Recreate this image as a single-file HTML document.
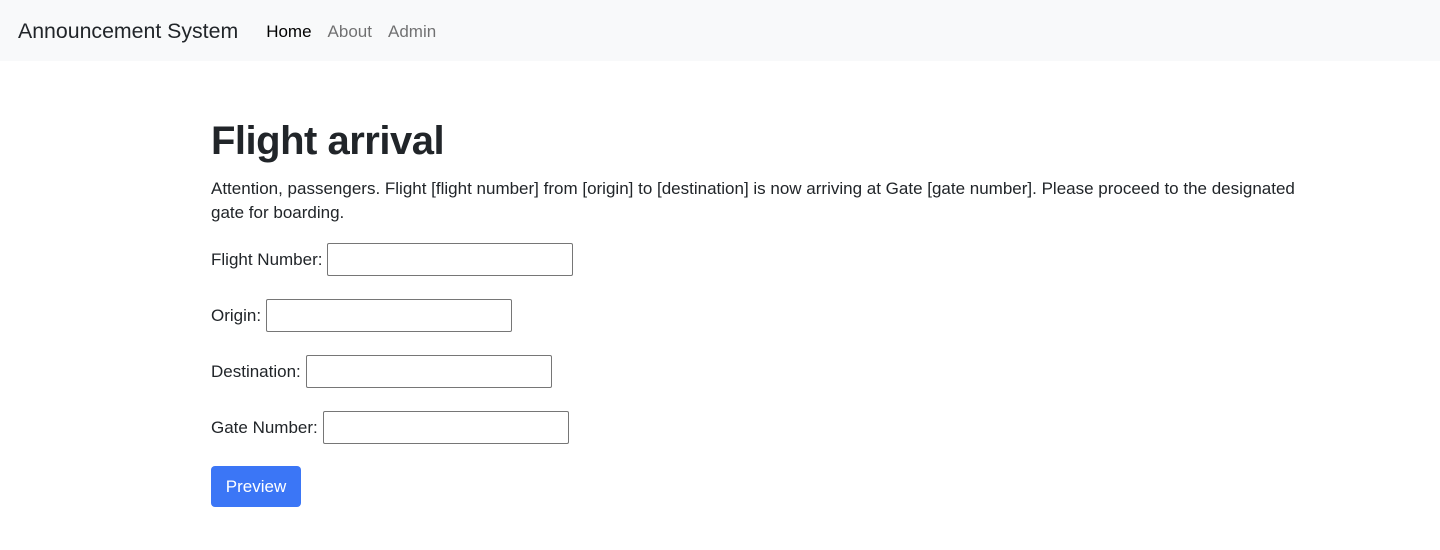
<!DOCTYPE html>
<html><head><style>
*{box-sizing:border-box}
body{margin:0;font-family:"Liberation Sans",Arial,sans-serif;color:#212529;font-size:17px;background:#fff}
nav{height:61px;background:#f8f9fa;display:flex;align-items:center;padding-left:18px;padding-top:2px}
.brand{font-size:21.3px;color:#212529;margin-right:28px}
nav a{font-size:17px;color:rgba(0,0,0,.55);margin-right:16px;text-decoration:none}
nav a.active{color:#000}
.main{position:absolute;left:211px;top:61px;right:60px}
h1{font-size:40px;font-weight:bold;margin:56px 0 12px;line-height:48px;letter-spacing:-0.5px}
p{margin:0 0 18px;line-height:24px;width:1110px}
.row{height:33px;display:flex;align-items:center;margin-bottom:23px}
.row label{margin-right:5px}
.row input{width:246px;height:33px;border:1px solid #767676;border-radius:2px}
button{background:#3b76f6;color:#fff;border:0;border-radius:4px;width:90px;height:41px;font-size:17px;font-family:inherit;margin-top:-1px}
</style></head><body>
<nav><span class="brand">Announcement System</span><a class="active">Home</a><a>About</a><a>Admin</a></nav>
<div class="main">
<h1>Flight arrival</h1>
<p>Attention, passengers. Flight [flight number] from [origin] to [destination] is now arriving at Gate [gate number]. Please proceed to the designated gate for boarding.</p>
<div class="row"><label>Flight Number:</label><input></div>
<div class="row"><label>Origin:</label><input></div>
<div class="row"><label>Destination:</label><input></div>
<div class="row"><label>Gate Number:</label><input></div>
<button>Preview</button>
</div>
</body></html>
